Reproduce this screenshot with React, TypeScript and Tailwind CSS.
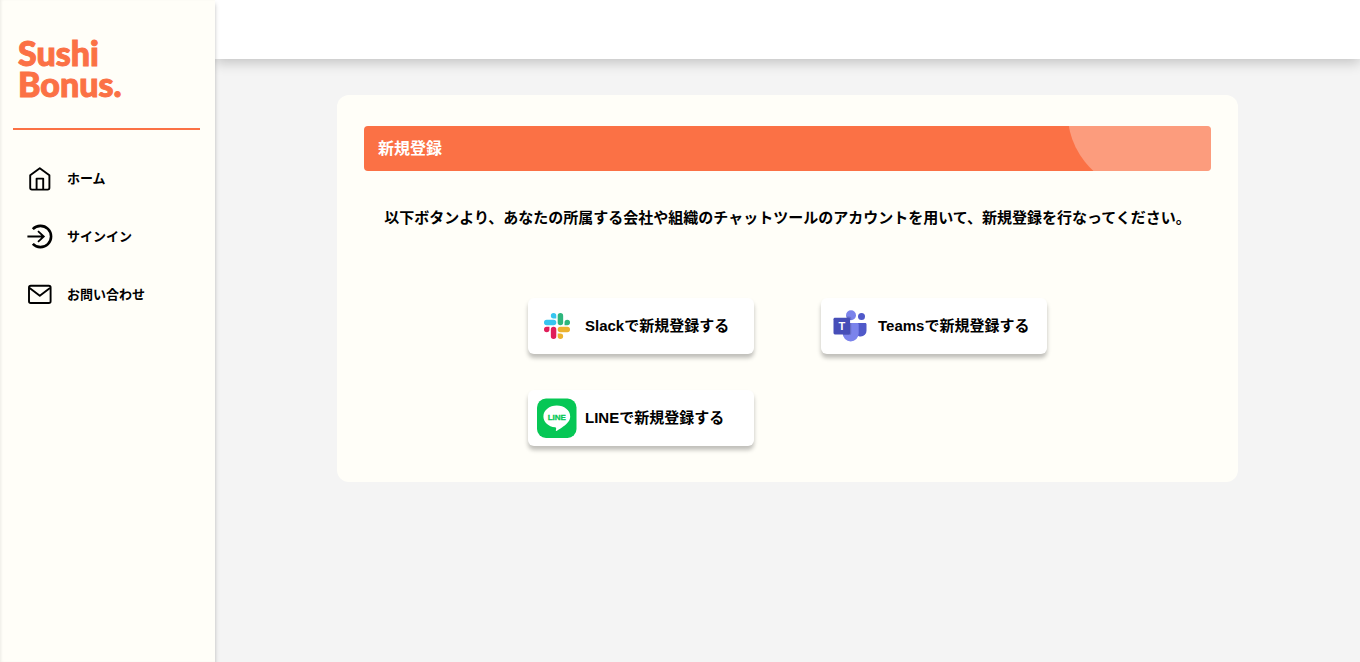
import type { ReactNode } from "react";

function HomeIcon() {
  return (
    <svg width="26" height="26" viewBox="0 0 26 26" fill="none" stroke="currentColor" strokeWidth="1.9" strokeLinejoin="round" aria-hidden>
      <path d="M3.2 9.2 12.8 2.2l9.6 7v12.6a1.8 1.8 0 0 1-1.8 1.8H5a1.8 1.8 0 0 1-1.8-1.8Z" />
      <path d="M9.6 23.4V12.6h6.6v10.8" />
    </svg>
  );
}

function SignInIcon() {
  return (
    <svg width="26" height="26" viewBox="0 0 26 26" fill="none" stroke="currentColor" aria-hidden>
      <path d="M5.8 5.2a10.6 10.6 0 1 1 0 14.6" strokeWidth="2.6" />
      <path d="M.4 12.5h16.2M11 7.1l5.8 5.4-5.8 5.4" strokeWidth="1.8" />
    </svg>
  );
}

function MailIcon() {
  return (
    <svg width="26" height="26" viewBox="0 0 26 26" fill="none" stroke="currentColor" strokeWidth="1.9" strokeLinejoin="round" aria-hidden>
      <rect x="2" y="3.8" width="21.6" height="17.2" rx="1.8" />
      <path d="m2.6 6.1 10.2 7.6L23 6.1" />
    </svg>
  );
}

function SlackIcon() {
  return (
    <svg width="26" height="26" viewBox="0 0 122.8 122.8" aria-hidden>
      <path fill="#E01E5A" d="M25.8 77.6a12.9 12.9 0 1 1-12.9-12.9h12.9zM32.3 77.6a12.9 12.9 0 0 1 25.8 0v32.3a12.9 12.9 0 0 1-25.8 0z" />
      <path fill="#36C5F0" d="M45.2 25.8a12.9 12.9 0 1 1 12.9-12.9v12.9zM45.2 32.3a12.9 12.9 0 0 1 0 25.8H12.9a12.9 12.9 0 0 1 0-25.8z" />
      <path fill="#2EB67D" d="M97 45.2a12.9 12.9 0 1 1 12.9 12.9H97zM90.5 45.2a12.9 12.9 0 0 1-25.8 0V12.9a12.9 12.9 0 0 1 25.8 0z" />
      <path fill="#ECB22E" d="M77.6 97a12.9 12.9 0 1 1-12.9 12.9V97zM77.6 90.5a12.9 12.9 0 0 1 0-25.8h32.3a12.9 12.9 0 0 1 0 25.8z" />
    </svg>
  );
}

function TeamsIcon() {
  return (
    <svg width="34" height="32" viewBox="0 0 34 32" aria-hidden>
      <circle cx="28.5" cy="6.4" r="3.5" fill="#5059C9" />
      <path d="M22 13h10.2c.8 0 1.3.6 1.3 1.3v6.4a5.7 5.7 0 0 1-5.8 5.8c-3.2 0-5.7-2.6-5.7-5.8Z" fill="#5059C9" />
      <circle cx="18" cy="5.2" r="5" fill="#7B83EB" />
      <path d="M10.5 13h13.8c.8 0 1.4.6 1.4 1.4v8.8a8 8 0 0 1-8 8.2 8 8 0 0 1-8-8.2v-9.4c0-.4.4-.8.8-.8Z" fill="#7B83EB" />
      <path d="M9.7 13h8.6v10.3c0 1-.8 1.8-1.8 1.8H10c-.2-.6-.3-1.2-.3-1.9ZM13.1 6.4h3.4c1 0 1.8.8 1.8 1.8v1.9a5 5 0 0 1-5.2-3.7Z" fill="#000" opacity=".14" />
      <rect x=".5" y="7.8" width="16.6" height="16.6" rx="1.4" fill="#464EB8" />
      <text x="8.8" y="20" textAnchor="middle" fill="#fff" fontFamily="Liberation Sans, sans-serif" fontSize="11" fontWeight="700">
        T
      </text>
    </svg>
  );
}

function LineIcon() {
  return (
    <svg width="40" height="40" viewBox="0 0 40 40" aria-hidden>
      <rect width="39.5" height="39.5" y=".5" rx="9" fill="#06C755" />
      <path d="M19.8 7.6c7.4 0 13.4 4.8 13.4 10.8 0 2.4-1 4.6-2.9 6.7-2.7 3.1-8.9 7-10.3 7.6-1.4.6-1.2-.4-1.1-.7l.2-1.1c0-.3.1-.7 0-1-.1-.3-.6-.5-1-.6C11.4 28.5 6.400 23.900 6.400 18.400c0-6 6-10.800 13.400-10.800Z" fill="#fff" />
      <text x="19.8" y="21.6" textAnchor="middle" fill="#06C755" stroke="#06C755" strokeWidth=".3" fontFamily="Liberation Sans, sans-serif" fontSize="8" fontWeight="700">
        LINE
      </text>
    </svg>
  );
}

const navItems = [
  { label: "ホーム", icon: <HomeIcon /> },
  { label: "サインイン", icon: <SignInIcon /> },
  { label: "お問い合わせ", icon: <MailIcon /> },
];

const providers = [
  { name: "Slack", icon: <SlackIcon /> },
  { name: "Teams", icon: <TeamsIcon /> },
  { name: "LINE", icon: <LineIcon /> },
];

function Sidebar() {
  return (
    <aside className="z-10 w-[215px] shrink-0 bg-[#fffef8] pr-[15px] pl-[13px] shadow-[0_4px_4px_rgba(0,0,0,0.25),inset_2px_0_3px_-1px_rgba(0,0,0,0.08)]">
      <a
        href="#"
        className="block border-b-2 border-[#fb7145] pt-[37px] pb-[29px] pl-[5px] font-['Lato',sans-serif] text-[34px] leading-[31px] font-black text-[#fb7145] [-webkit-text-stroke:1px_#fb7145]"
      >
        Sushi
        <br />
        Bonus.
      </a>
      <nav className="mt-5">
        <ul>
          {navItems.map((item) => (
            <li key={item.label}>
              <a href="#" className="flex h-[58px] items-center gap-[14px] pl-[14px] text-[13px] font-bold">
                {item.icon}
                {item.label}
              </a>
            </li>
          ))}
        </ul>
      </nav>
    </aside>
  );
}

function ProviderButton({ icon, name }: { icon: ReactNode; name: string }) {
  return (
    <button
      type="button"
      className="flex h-14 cursor-pointer items-center rounded-md bg-white text-[15px] font-bold shadow-[0_4px_4px_rgba(0,0,0,0.25)]"
    >
      <span className="flex w-[57px] shrink-0 justify-center">{icon}</span>
      {name}で新規登録する
    </button>
  );
}

export default function App() {
  return (
    <div className="flex min-h-screen bg-[#f4f4f4] font-['Liberation_Sans','Noto_Sans_CJK_JP',sans-serif] text-black">
      <Sidebar />
      <div className="min-w-0 flex-1">
        <header className="h-[59px] bg-white shadow-[0_4px_12px_rgba(0,0,0,0.2)]" />
        <main className="mx-auto mt-9 w-full max-w-[901px] rounded-xl bg-[#fffef8] px-[27px] pt-[31px] pb-9">
          <div className="relative flex h-[45px] items-center overflow-hidden rounded bg-[#fb7145] px-[14px]">
            <h1 className="text-base font-bold text-white">新規登録</h1>
            <span className="absolute -top-[95px] -right-[57px] h-[168px] w-[200px] rounded-[50%] bg-white/30" />
          </div>
          <p className="mt-[35px] text-center text-[15px] leading-6 font-bold">
            以下ボタンより、あなたの所属する会社や組織のチャットツールのアカウントを用いて、新規登録を行なってください。
          </p>
          <div className="mx-auto mt-[68px] grid max-w-[519px] grid-cols-2 gap-x-[67px] gap-y-9">
            {providers.map((provider) => (
              <ProviderButton key={provider.name} icon={provider.icon} name={provider.name} />
            ))}
          </div>
        </main>
      </div>
    </div>
  );
}
